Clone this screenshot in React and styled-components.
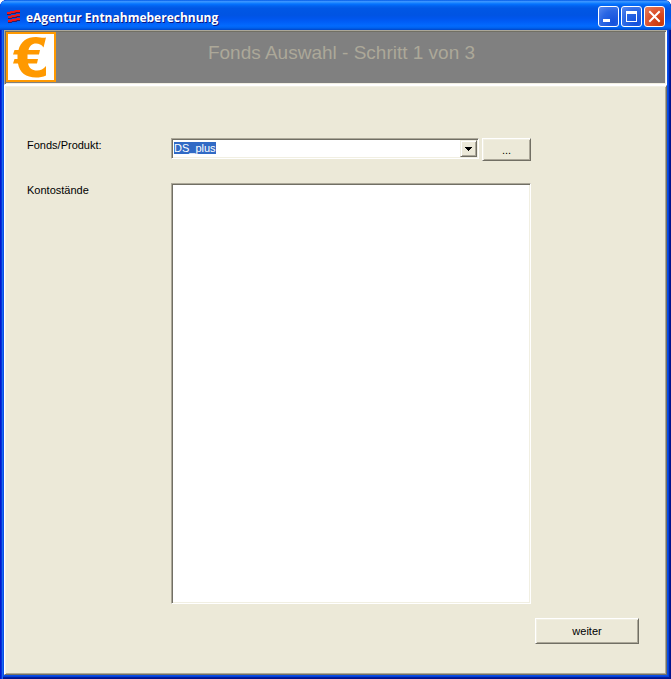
import React, { useEffect, useRef } from "react";
import styled, { createGlobalStyle } from "styled-components";

const Global = createGlobalStyle`
  *, *::before, *::after { box-sizing: border-box; }
  body { margin: 0; background: #fff; font: 11px/14px "Liberation Sans", Arial, sans-serif; color: #000; }
  button, input { font: inherit; color: inherit; }
`;

const Window = styled.div`
  min-height: 100vh;
  display: flex;
  flex-direction: column;
  padding: 0 4px 4px;
  background: #0a4ee8;
  border-radius: 7px 7px 0 0;
  box-shadow: inset 1px 0 #0019cf, inset 2px 0 #0831d9, inset 3px 0 #166aee,
    inset -1px -1px #00138c, inset -2px -2px #001ea0, inset -3px -3px #0441d8;
`;

const TitleBar = styled.header`
  height: 30px;
  margin: 0 -4px;
  padding: 3px 6px 0 7px;
  display: flex;
  align-items: center;
  border-radius: 7px 7px 0 0;
  background: linear-gradient(to bottom, #0058e6 0%, #3a93ff 5%, #288eff 8%, #127dff 11%, #036ffc 15%, #0262ee 20%, #0057e5 28%, #0054e3 50%, #0055eb 60%, #005bf5 70%, #026afe 86%, #0062ef 93%, #0046c8 100%);
`;

const Title = styled.h1`
  flex: 1;
  margin: 0 0 0 5px;
  padding-top: 2px;
  font: bold 12px/16px "Open Sans", "Noto Sans", sans-serif;
  color: #fff;
  text-shadow: 1px 1px #0a1883;
`;

const Controls = styled.div`
  display: flex;
  gap: 2px;
`;

const CaptionButton = styled.button`
  width: 21px;
  height: 21px;
  padding: 0;
  display: grid;
  place-items: center;
  border: 1px solid #fff;
  border-radius: 3px;
  background: ${({ $close }) =>
    $close
      ? "radial-gradient(circle at 80% 85%, #c8390a 0%, #da4a24 45%, #e6805f 100%)"
      : "radial-gradient(circle at 75% 80%, #1450dc 0%, #2a66e4 55%, #5a8af0 100%)"};
`;

const Banner = styled.section`
  display: flex;
  gap: 8px;
  height: 55px;
  background: #808080;
  border: 1px solid;
  border-color: #aca899 #fff #fff #aca899;
  box-shadow: inset 1px 1px #716f64, inset -1px -1px #f1efe2;
  padding: 1px;
`;

const Logo = styled.svg`
  flex: none;
  width: 50px;
  height: 50px;
`;

const BannerTitle = styled.h2`
  flex: 1;
  margin: 0 46px 0 0;
  padding-top: 9px;
  font: 19px/24px "Liberation Sans", Arial, sans-serif;
  color: #aca899;
  text-align: center;
`;

const Panel = styled.main`
  flex: 1;
  display: flex;
  flex-direction: column;
  background: #ece9d8;
  border: 1px solid;
  border-color: #fff #716f64 #716f64 #fff;
  box-shadow: inset 1px 1px #f1efe2, inset -1px -1px #aca899;
  padding: 52px 27px 30px 22px;
`;

const Fields = styled.form`
  flex: 1;
  display: grid;
  grid-template-columns: 144px minmax(0, 1fr);
  grid-template-rows: auto 1fr;
  row-gap: 22px;
  margin-right: 108px;
`;

const Label = styled.label`
  justify-self: start;
  align-self: start;
`;

const FieldRow = styled.div`
  display: flex;
  align-items: flex-start;
  gap: 3px;
`;

const Combo = styled.div`
  flex: 1;
  display: flex;
  height: 21px;
  background: #fff;
  border: 1px solid;
  border-color: #aca899 #fff #fff #aca899;
  box-shadow: inset 1px 1px #716f64, inset -1px -1px #f1efe2;
  padding: 1px;
`;

const ComboInput = styled.input`
  flex: 1;
  min-width: 0;
  height: 15px;
  padding: 0 0 0 1px;
  border: 0;
  outline: 0;
  background: none;
  &::selection { background: #316ac5; color: #fff; }
`;

const PushButton = styled.button`
  width: ${({ $wide }) => ($wide ? "104px" : "49px")};
  height: ${({ $wide }) => ($wide ? "26px" : "23px")};
  padding: 0;
  background: #ece9d8;
  border: 1px solid;
  border-color: #fff #716f64 #716f64 #fff;
  box-shadow: inset 1px 1px #f1efe2, inset -1px -1px #aca899;
`;

const DropButton = styled(PushButton)`
  width: 17px;
  height: 17px;
  display: grid;
  place-items: center;
  border-color: #f1efe2 #716f64 #716f64 #f1efe2;
  box-shadow: inset 1px 1px #fff, inset -1px -1px #aca899;
`;

const Balances = styled.textarea`
  display: block;
  width: 100%;
  height: 100%;
  resize: none;
  outline: 0;
  border: 1px solid;
  border-color: #aca899 #fff #fff #aca899;
  box-shadow: inset 1px 1px #716f64, inset -1px -1px #f1efe2;
  background: #fff;
  border-radius: 0;
  padding: 4px;
`;

const Footer = styled.footer`
  display: flex;
  justify-content: flex-end;
  padding-top: 14px;
`;

export default function App() {
  const product = useRef(null);
  useEffect(() => {
    product.current.focus();
    product.current.select();
  }, []);

  return (
    <>
      <Global />
      <Window>
        <TitleBar>
          <svg width="14" height="14" viewBox="0 0 14 14" aria-hidden="true">
            <path d="M0 4h3l1-1h4l1-1h4M1 8h3l1-1h4l1-1h3M1 12h3l1-1h4l1-1h3" fill="none" stroke="#3a1a5a" strokeWidth="2" />
            <path d="M0 3h3l1-1h3l2-1h4M1 7h3l1-1h3l2-1h3M1 11h3l1-1h3l2-1h3" fill="none" stroke="#f01818" strokeWidth="2" />
          </svg>
          <Title>eAgentur Entnahmeberechnung</Title>
          <Controls>
            <CaptionButton type="button" aria-label="Minimieren">
              <svg width="19" height="19" aria-hidden="true"><path d="M4 12h7v3H4z" fill="#fff" /></svg>
            </CaptionButton>
            <CaptionButton type="button" aria-label="Maximieren">
              <svg width="19" height="19" aria-hidden="true"><path fillRule="evenodd" d="M4 4h11v11H4zM5 7v7h9V7z" fill="#fff" /></svg>
            </CaptionButton>
            <CaptionButton type="button" aria-label="Schließen" $close>
              <svg width="19" height="19" aria-hidden="true"><path d="M5 5l9 9M14 5l-9 9" stroke="#fff" strokeWidth="2" strokeLinecap="square" /></svg>
            </CaptionButton>
          </Controls>
        </TitleBar>
        <Banner>
          <Logo viewBox="0 0 50 50" role="img" aria-label="Euro">
            <path d="M1 1h48v48H1z" fill="#fff" stroke="#ff9900" strokeWidth="2" />
            <path d="M40 5.500L37.500 15.500C35.500 12.500 33 11.500 30 11.500C26 11.500 23.500 14 22.500 18H34L33 22.500H21.500V27H32L31 31.500H22C23 36 26 38.500 31 38.500C34.500 38.500 37.500 37 40 34V43.500C37 45 33.500 45.500 30 45.500C20 45.500 13.500 40.500 12 31.500H7L8.500 27H11.500V22.500H7L8.500 18H12.500C14.500 9.500 21 5 30 5C34 5 37 6.500 40 5.500Z" fill="#ff9900" />
          </Logo>
          <BannerTitle>Fonds Auswahl - Schritt 1 von 3</BannerTitle>
        </Banner>
        <Panel>
          <Fields id="fonds" onSubmit={(e) => e.preventDefault()}>
            <Label htmlFor="product">Fonds/Produkt:</Label>
            <FieldRow>
              <Combo>
                <ComboInput id="product" ref={product} defaultValue="DS_plus" spellCheck={false} />
                <DropButton type="button" aria-label="Liste öffnen">
                  <svg width="7" height="4" aria-hidden="true"><path d="M0 0h7v1H6v1H5v1H4v1H3V3H2V2H1V1H0z" /></svg>
                </DropButton>
              </Combo>
              <PushButton type="button">...</PushButton>
            </FieldRow>
            <Label htmlFor="balances">Kontostände</Label>
            <Balances id="balances" readOnly />
          </Fields>
          <Footer>
            <PushButton type="submit" form="fonds" $wide>weiter</PushButton>
          </Footer>
        </Panel>
      </Window>
    </>
  );
}
